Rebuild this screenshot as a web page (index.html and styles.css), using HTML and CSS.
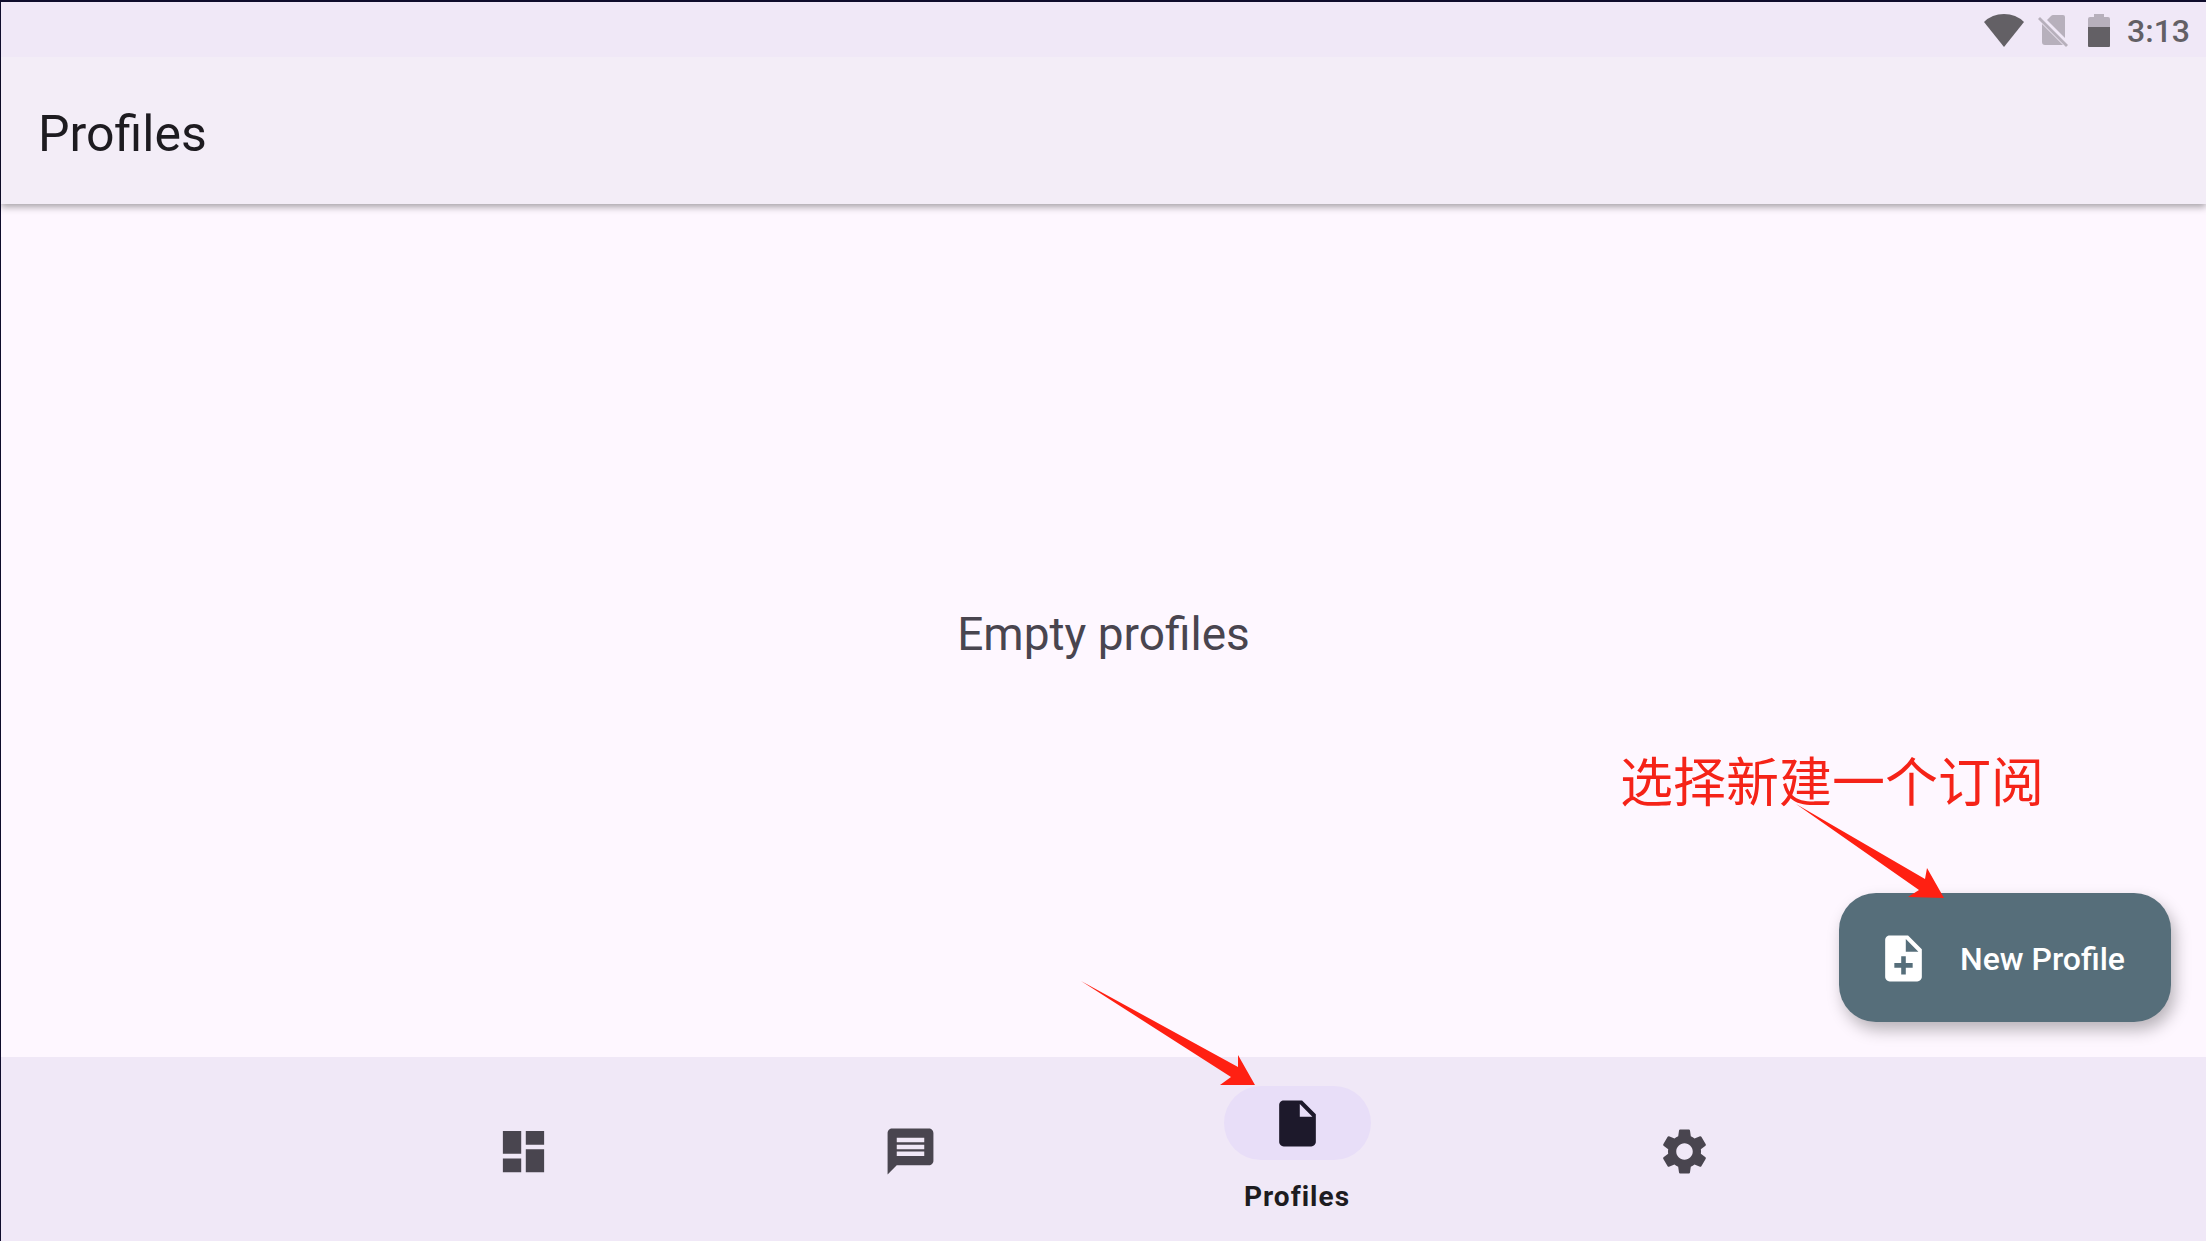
FILE: index.html
```html
<!DOCTYPE html>
<html lang="en">
<head>
<meta charset="utf-8">
<meta name="viewport" content="width=device-width, initial-scale=1">
<title>Profiles</title>
<link rel="stylesheet" href="styles.css">
</head>
<body>
<div class="screen">
  <div class="status-bar">
    <svg class="status-wifi" viewBox="0 0 40 33" aria-hidden="true"><path d="M0 8Q8 0 20 0T40 8L20 33Z"/></svg>
    <svg class="status-sim" viewBox="0 0 30 33" aria-hidden="true">
      <path d="M9 6L13 2Q14 1 15 1H25Q27 1 27 3V24ZM4 10L25 31H7Q4 31 4 28Z"/>
      <path d="M2 3L30 31L28 33L0 5Z"/>
    </svg>
    <svg class="status-battery" viewBox="0 0 22 33" aria-hidden="true">
      <path class="battery-shell" d="M0 13V5Q0 3 2 3H6V0H16V3H20Q22 3 22 5V13Z"/>
      <path d="M0 13H22V32Q22 33 21 33H1Q0 33 0 32Z"/>
    </svg>
    <time class="clock">3:13</time>
  </div>
  <header class="app-bar"><h1 class="app-title">Profiles</h1></header>
  <main class="content">
    <p class="empty">Empty profiles</p>
    <div class="fab-anchor">
      <button class="fab" type="button">
        <svg class="icon" viewBox="0 0 24 24" aria-hidden="true"><path d="M14 2H6C4.900 2 4 2.900 4 4V20C4 21.100 4.900 22 6 22H18C19.100 22 20 21.100 20 20V8ZM16 16H13V19H11V16H8V14H11V11H13V14H16ZM13 9V3.500L18.500 9Z"/></svg>
        <span>New Profile</span>
      </button>
      <p class="note" lang="zh-CN">选择新建一个订阅</p>
      <svg class="arrow arrow-fab" viewBox="0 0 148 94" aria-hidden="true"><path d="M0 0L129 75L131 64L148 94L112 93L123 86Z"/></svg>
    </div>
  </main>
  <nav class="nav">
    <a class="nav-item" href="#dashboard" aria-label="Dashboard">
      <svg class="icon" viewBox="0 0 24 24" aria-hidden="true"><path d="M3 13H11V3H3ZM3 21H11V15H3ZM13 21H21V11H13ZM13 3V9H21V3Z"/></svg>
    </a>
    <a class="nav-item" href="#logs" aria-label="Logs">
      <svg class="icon" viewBox="0 0 24 24" aria-hidden="true"><path d="M20 2H4C2.900 2 2 2.900 2 4V22L6 18H20C21.100 18 22 17.100 22 16V4C22 2.900 21.100 2 20 2ZM6 6H18V8H6ZM18 11H6V9H18ZM18 14H6V12H18Z"/></svg>
    </a>
    <a class="nav-item active" href="#profiles" aria-current="page">
      <span class="pill"><svg class="icon" viewBox="0 0 24 24" aria-hidden="true"><path d="M6 2C4.900 2 4 2.900 4 4V20C4 21.100 4.900 22 6 22H18C19.100 22 20 21.100 20 20V8L14 2ZM13 9V3.500L18.500 9Z"/></svg></span>
      <span class="nav-label">Profiles</span>
      <svg class="arrow arrow-nav" viewBox="0 0 174 104" aria-hidden="true"><path d="M0 0L157 86V74L174 104H139L150 96Z"/></svg>
    </a>
    <a class="nav-item" href="#settings" aria-label="Settings">
      <svg class="icon" viewBox="0 0 24 24" aria-hidden="true"><path d="M19.140 12.940c.04-.3.06-.61.06-.94 0-.32-.02-.64-.07-.94l2.030-1.580c.18-.14.23-.41.12-.61l-1.920-3.320c-.12-.22-.37-.29-.59-.22l-2.390.96c-.5-.38-1.030-.7-1.620-.94l-.36-2.540c-.04-.24-.24-.41-.48-.41h-3.840c-.24 0-.43.17-.47.41l-.36 2.540c-.59.24-1.130.57-1.620.94l-2.390-.96c-.22-.08-.47 0-.59.22L2.740 8.870c-.12.21-.08.47.12.61l2.030 1.580c-.05.3-.09.63-.09.94s.02.64.07.94l-2.030 1.580c-.18.14-.23.41-.12.61l1.920 3.320c.12.22.37.29.59.22l2.390-.96c.5.38 1.030.7 1.620.94l.36 2.540c.05.24.24.41.48.41h3.840c.24 0 .44-.17.47-.41l.36-2.540c.59-.24 1.130-.56 1.620-.94l2.390.96c.22.08.47 0 .59-.22l1.920-3.320c.12-.22.07-.47-.12-.61zM12 15.600c-1.980 0-3.600-1.620-3.600-3.600s1.620-3.600 3.600-3.600 3.600 1.620 3.600 3.600-1.620 3.600-3.600 3.600z"/></svg>
    </a>
  </nav>
</div>
</body>
</html>
```
FILE: styles.css
```css
* { box-sizing: border-box; }

body {
  margin: 0;
  font-family: Roboto, "Noto Sans CJK SC", sans-serif;
  color: #1d1b20;
}

h1, p { margin: 0; font-weight: 400; }

svg { display: block; fill: currentColor; flex: none; }

.screen {
  min-height: 100vh;
  display: flex;
  flex-direction: column;
  border-top: 2px solid #0f0c2c;
  border-left: 1px solid #0f0c2c;
  background: #fef7ff;
}

.status-bar {
  position: relative;
  z-index: 1;
  height: 55px;
  padding: 2px 16px 0;
  display: flex;
  align-items: center;
  justify-content: flex-end;
  background: #f0e8f7;
  color: #636065;
}

.status-wifi { width: 40px; height: 33px; margin-right: 14px; }
.status-sim { width: 30px; height: 33px; margin-right: 20px; color: #b7b0bc; }
.status-battery { width: 22px; height: 33px; margin-right: 17px; }
.battery-shell { fill: #b7b0bc; }
.clock { font-size: 32px; line-height: 40px; font-weight: 500; }

.app-bar {
  position: relative;
  height: 147px;
  padding: 6px 37px 0;
  display: flex;
  align-items: center;
  background: #f3edf7;
  box-shadow: 0 3px 7px rgba(0, 0, 0, 0.35);
}

.app-title { font-size: 50px; line-height: 60px; }

.content {
  position: relative;
  flex: 1;
  padding-top: 6px;
  display: flex;
  align-items: center;
  justify-content: center;
}

.empty { font-size: 46px; line-height: 54px; color: #49454f; }

.fab-anchor { position: absolute; right: 35px; bottom: 35px; z-index: 1; }

.fab {
  height: 129px;
  padding: 2px 46px 0 37px;
  display: flex;
  align-items: center;
  gap: 29px;
  border: 0;
  border-radius: 37px;
  background: #566e7a;
  color: #fff;
  font: 500 32px/40px Roboto, sans-serif;
  box-shadow: 4px 8px 16px rgba(0, 0, 0, 0.28);
}

.icon { width: 55px; height: 55px; }

.note {
  position: absolute;
  right: 127px;
  bottom: 203px;
  font-family: "Noto Sans CJK SC", sans-serif;
  font-size: 53px;
  line-height: 80px;
  white-space: nowrap;
  color: #f52318;
}

.arrow { position: absolute; fill: #ff2012; }
.arrow-fab { width: 148px; height: 94px; left: -43px; top: -89px; }
.arrow-nav { width: 174px; height: 104px; left: -23px; top: -76px; }

.nav {
  height: 184px;
  display: flex;
  justify-content: center;
  background: #f0e8f7;
}

.nav-item {
  position: relative;
  flex: 0 1 387px;
  padding-top: 4px;
  display: flex;
  flex-direction: column;
  align-items: center;
  justify-content: center;
  color: #49454f;
  text-decoration: none;
}

.nav-item.active {
  padding-top: 29px;
  justify-content: flex-start;
  gap: 21px;
  color: #1d1b20;
}

.pill {
  width: 147px;
  height: 74px;
  display: flex;
  align-items: center;
  justify-content: center;
  border-radius: 37px;
  background: #e8def8;
  color: #1d192b;
}

.nav-label {
  font-size: 28px;
  line-height: 32px;
  font-weight: 700;
  letter-spacing: 1px;
}
```
